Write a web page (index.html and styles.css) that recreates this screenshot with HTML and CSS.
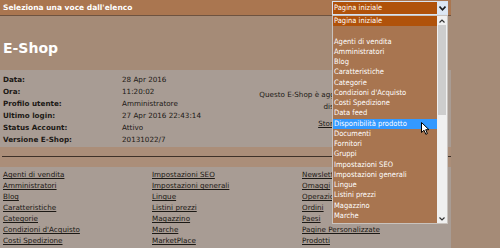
FILE: index.html
```html
<!doctype html>
<html>
<head>
<meta charset="utf-8">
<title>E-Shop Admin</title>
<link rel="stylesheet" href="styles.css">
</head>
<body>
<div class="page">
    <div class="topbar">
        <span class="topbar-title">Seleziona una voce dall'elenco</span>
        <div class="picker">
            <div class="picker-box">
                <span class="picker-value">Pagina iniziale</span>
                <span class="picker-arrow"><svg width="7" height="5" viewBox="0 0 7 5"><path d="M0.5 0.5 L3.5 3.8 L6.5 0.5" fill="none" stroke="#1c1c1c" stroke-width="1.6"/></svg></span>
            </div>
            <div class="picker-list">
                <ul class="picker-items">
                    <li class="sel">Pagina iniziale</li>
                    <li>&nbsp;</li>
                    <li>Agenti di vendita</li>
                    <li>Amministratori</li>
                    <li>Blog</li>
                    <li>Caratteristiche</li>
                    <li>Categorie</li>
                    <li>Condizioni d'Acquisto</li>
                    <li>Costi Spedizione</li>
                    <li>Data feed</li>
                    <li class="hover">Disponibilità prodotto</li>
                    <li>Documenti</li>
                    <li>Fornitori</li>
                    <li>Gruppi</li>
                    <li>Impostazioni SEO</li>
                    <li>Impostazioni generali</li>
                    <li>Lingue</li>
                    <li>Listini prezzi</li>
                    <li>Magazzino</li>
                    <li>Marche</li>
                </ul>
                <div class="scroll">
                    <div class="scroll-btn"><svg width="6" height="4" viewBox="0 0 6 4"><path d="M0.5 3.5 L3 1 L5.5 3.5" fill="none" stroke="#333" stroke-width="1.2"/></svg></div>
                    <div class="scroll-thumb"></div>
                    <div class="scroll-track"></div>
                    <div class="scroll-btn"><svg width="6" height="4" viewBox="0 0 6 4"><path d="M0.5 0.5 L3 3 L5.5 0.5" fill="none" stroke="#333" stroke-width="1.2"/></svg></div>
                </div>
            </div>
            <svg class="cursor" width="9" height="13" viewBox="0 0 9 13"><path d="M0.5 0.5 L0.5 10.5 L3 8.2 L4.8 12.3 L6.4 11.6 L4.7 7.7 L8 7.7 Z" fill="#fff" stroke="#000" stroke-width="1"/></svg>
        </div>
    </div>

    <h1 class="shop-title">E-Shop</h1>

    <div class="info">
        <div class="info-table">
            <span class="lbl">Data:</span><span class="val">28 Apr 2016</span>
            <span class="lbl">Ora:</span><span class="val">11:20:02</span>
            <span class="lbl">Profilo utente:</span><span class="val">Amministratore</span>
            <span class="lbl">Ultimo login:</span><span class="val">27 Apr 2016 22:43:14</span>
            <span class="lbl">Status Account:</span><span class="val">Attivo</span>
            <span class="lbl">Versione E-Shop:</span><span class="val">20131022/7</span>
        </div>
        <div class="info-note">
            <p>Questo E-Shop è aggiornato all'ultima versione</p>
            <p>disponibile.</p>
            <p class="note-link"><a href="#">Storia versioni</a></p>
        </div>
    </div>

    <div class="sep"><div class="sep-line"></div></div>

    <div class="links">
        <ul>
            <li><a href="#">Agenti di vendita</a></li>
            <li><a href="#">Amministratori</a></li>
            <li><a href="#">Blog</a></li>
            <li><a href="#">Caratteristiche</a></li>
            <li><a href="#">Categorie</a></li>
            <li><a href="#">Condizioni d'Acquisto</a></li>
            <li><a href="#">Costi Spedizione</a></li>
        </ul>
        <ul>
            <li><a href="#">Impostazioni SEO</a></li>
            <li><a href="#">Impostazioni generali</a></li>
            <li><a href="#">Lingue</a></li>
            <li><a href="#">Listini prezzi</a></li>
            <li><a href="#">Magazzino</a></li>
            <li><a href="#">Marche</a></li>
            <li><a href="#">MarketPlace</a></li>
        </ul>
        <ul>
            <li><a href="#">Newsletter</a></li>
            <li><a href="#">Omaggi</a></li>
            <li><a href="#">Operazioni</a></li>
            <li><a href="#">Ordini</a></li>
            <li><a href="#">Paesi</a></li>
            <li><a href="#">Pagine Personalizzate</a></li>
            <li><a href="#">Prodotti</a></li>
        </ul>
    </div>
</div>
</body>
</html>
```

FILE: styles.css
```css
html, body {
    margin: 0;
    padding: 0;
    height: 248px;
    background: #a58b77;
    overflow: hidden;
}
body {
    font-family: "DejaVu Sans", Verdana, sans-serif;
    color: #1c1915;
}
.page {
    width: 451px;
}
.topbar {
    display: flex;
    justify-content: space-between;
    align-items: flex-start;
    height: 15px;
    background: #aa7650;
    border-bottom: 1px solid #6e5340;
}
.topbar-title {
    padding: 3px 0 0 3px;
    color: #fff;
    font-weight: bold;
    font-size: 7.5px;
    line-height: 9px;
}
.picker {
    position: relative;
    margin: 1px 3px 0 0;
    font-family: "DejaVu Sans Condensed", "Liberation Sans", sans-serif;
    font-size: 7.5px;
    color: #fff;
}
.picker-box {
    display: flex;
    width: 114px;
    height: 12px;
    border: 1px solid #d9e3ef;
    background: #b0520a;
}
.picker-value {
    flex: 1;
    padding-left: 1px;
    line-height: 12px;
}
.picker-arrow {
    display: flex;
    align-items: center;
    justify-content: center;
    width: 10px;
    background: #dde7f3;
}
.picker-list {
    position: absolute;
    top: 14px;
    left: 0;
    display: flex;
    width: 114px;
    height: 207px;
    border: 1px solid #c9c3be;
    background: #a87550;
    z-index: 2;
}
.picker-items {
    flex: 1;
    margin: 0;
    padding: 0;
    list-style: none;
    overflow: hidden;
}
.picker-items li {
    height: 10.26px;
    line-height: 10.26px;
    padding-left: 1px;
    white-space: nowrap;
}
.picker-items li.sel { background: #b0520a; }
.picker-items li.hover { background: #3399ff; }
.scroll {
    display: flex;
    flex-direction: column;
    width: 10px;
    background: #f0f0f0;
}
.scroll-btn {
    display: flex;
    align-items: center;
    justify-content: center;
    height: 9px;
}
.scroll-thumb {
    height: 90px;
    margin: 0 1px;
    background: #cdcdcd;
}
.scroll-track { flex: 1; }
.cursor {
    position: absolute;
    left: 89px;
    top: 121px;
    z-index: 3;
}
.shop-title {
    margin: 24px 0 14px 3px;
    color: #fff;
    font-size: 14px;
    line-height: 16px;
    font-weight: bold;
}
.info {
    display: grid;
    grid-template-columns: 237px 1fr;
    height: 77px;
    background: #a89c94;
}
.info-table {
    display: grid;
    grid-template-columns: 119px 1fr;
    grid-auto-rows: 12px;
    padding: 4px 0 0 3px;
    font-size: 7.2px;
    line-height: 12px;
}
.lbl { font-weight: bold; }
.info-note {
    padding-top: 19px;
    text-align: center;
    font-size: 7.2px;
    line-height: 12px;
}
.info-note p { margin: 0; }
.info-note .note-link { margin-top: 5px; }
.info-note a, .links a {
    color: #1c1915;
    text-decoration: underline;
}
.sep {
    height: 20px;
    padding-top: 9px;
    box-sizing: border-box;
    background: #ab8e79;
}
.sep-line {
    margin-left: 2px;
    border-top: 1px solid #3e3129;
}
.links {
    display: grid;
    grid-template-columns: 149px 150px 1fr;
    padding: 2px 0 0 3px;
    height: 79px;
    overflow: hidden;
    background: #a89c94;
}
.links ul {
    margin: 0;
    padding: 0;
    list-style: none;
    font-size: 7.2px;
    line-height: 11px;
}
```
